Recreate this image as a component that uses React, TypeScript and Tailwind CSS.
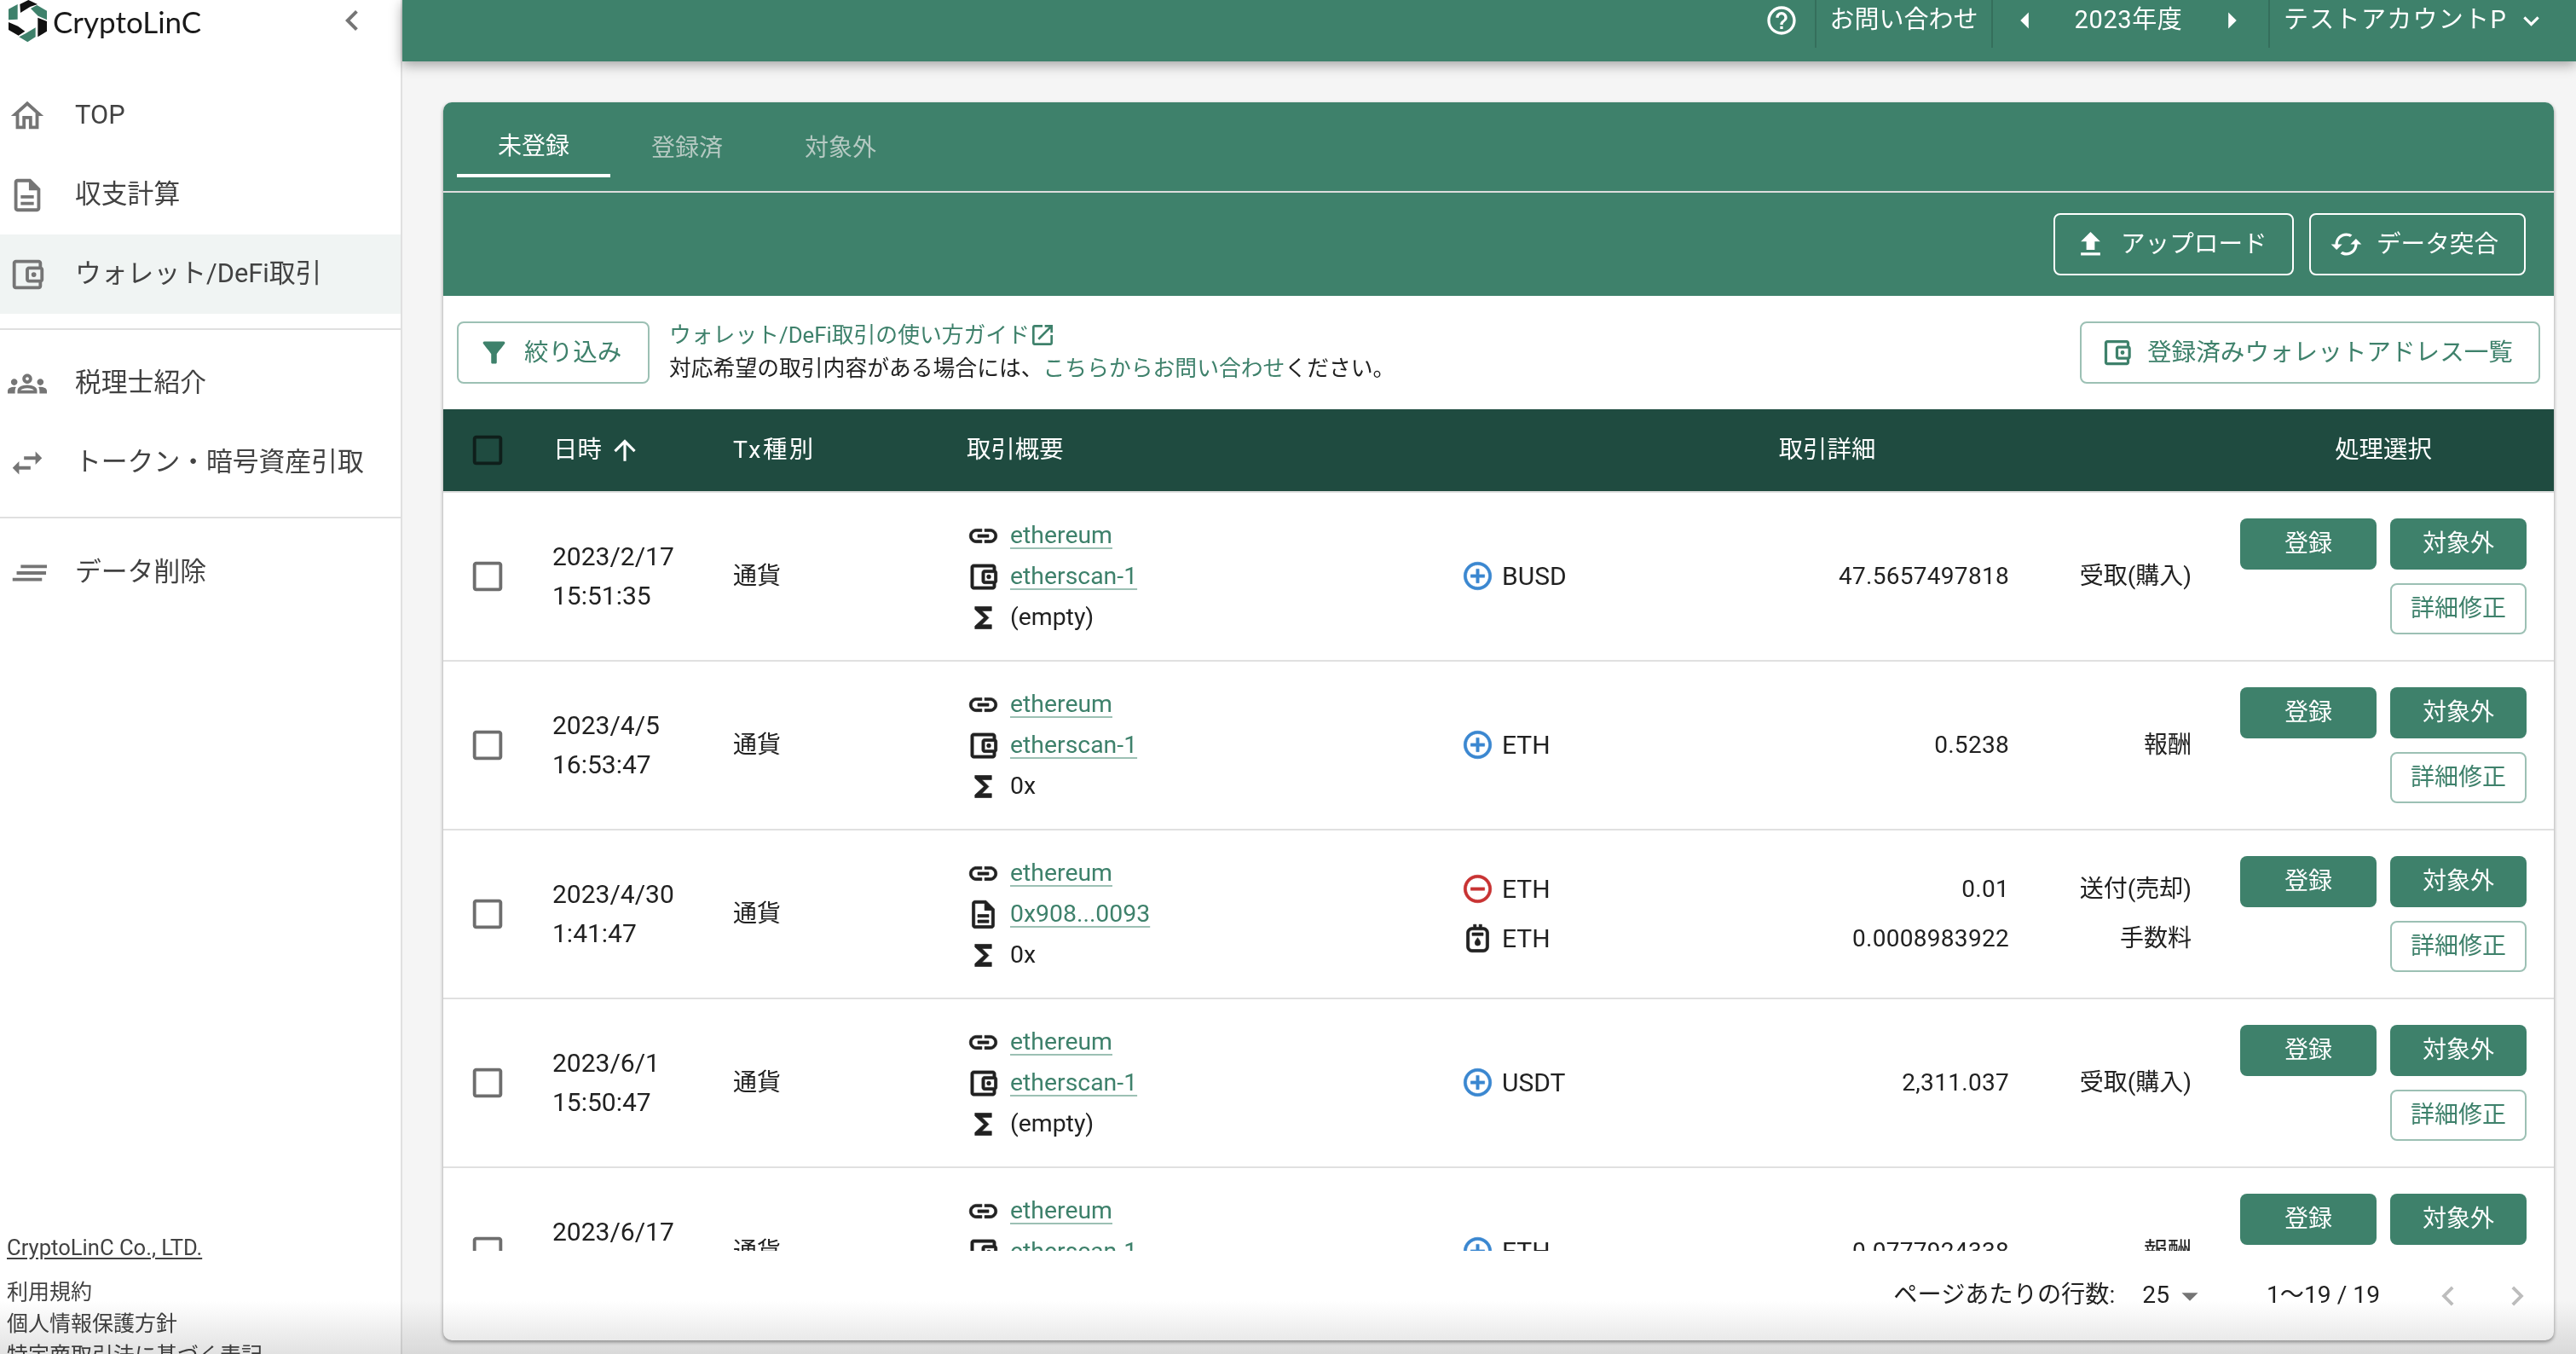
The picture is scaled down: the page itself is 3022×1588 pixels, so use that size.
import type { ReactNode } from "react";

const P = {
  home: "m12 5.69 5 4.5V18h-2v-6H9v6H7v-7.81zM12 3 2 12h3v8h6v-6h2v6h6v-8h3z",
  doc: "M8 16h8v2H8zm0-4h8v2H8zm6-10H6c-1.1 0-2 .9-2 2v16c0 1.1.89 2 1.99 2H18c1.1 0 2-.9 2-2V8zm4 18H6V4h7v5h5z",
  wallet:
    "M21 7.28V5c0-1.1-.9-2-2-2H5c-1.11 0-2 .9-2 2v14c0 1.1.89 2 2 2h14c1.1 0 2-.9 2-2v-2.28c.59-.35 1-.98 1-1.72V9c0-.74-.41-1.38-1-1.72M20 9v6h-7V9zM5 19V5h14v2h-6c-1.1 0-2 .9-2 2v6c0 1.1.9 2 2 2h6v2zM16 10.5a1.5 1.5 0 1 0 0 3 1.5 1.5 0 0 0 0-3",
  groups:
    "M4 13c1.1 0 2-.9 2-2s-.9-2-2-2-2 .9-2 2 .9 2 2 2m1.13 1.1c-.37-.06-.74-.1-1.13-.1-.99 0-1.93.21-2.78.58C.48 14.9 0 15.62 0 16.43V18h4.5v-1.61c0-.83.23-1.61.63-2.29M20 13c1.1 0 2-.9 2-2s-.9-2-2-2-2 .9-2 2 .9 2 2 2m4 3.43c0-.81-.48-1.53-1.22-1.85-.85-.37-1.79-.58-2.78-.58-.39 0-.76.04-1.13.1.4.68.63 1.46.63 2.29V18H24zm-7.76-2.78c-1.17-.52-2.61-.9-4.24-.9s-3.07.39-4.24.9C6.68 14.13 6 15.21 6 16.39V18h12v-1.61c0-1.18-.68-2.26-1.76-2.74M8.07 16c.09-.23.13-.39.91-.69.97-.38 1.99-.56 3.02-.56s2.05.18 3.02.56c.77.3.81.46.91.69zM12 8c.55 0 1 .45 1 1s-.45 1-1 1-1-.45-1-1 .45-1 1-1m0-2c-1.66 0-3 1.34-3 3s1.34 3 3 3 3-1.34 3-3-1.34-3-3-3",
  swap: "M6.99 11 3 15l3.99 4v-3H14v-2H6.99zM21 9l-3.99-4v3H10v2h7.01v3z",
  notes: "M8 7h18v2H8zM5.5 11h18v2H5.500zM3 15h18v2H3z",
  chevL: "M15.41 7.41 14 6l-6 6 6 6 1.41-1.41L10.83 12z",
  chevR: "M10 6 8.59 7.41 13.17 12l-4.58 4.59L10 18l6-6z",
  help: "M11 18h2v-2h-2zm1-16C6.48 2 2 6.48 2 12s4.48 10 10 10 10-4.48 10-10S17.52 2 12 2m0 18c-4.41 0-8-3.59-8-8s3.59-8 8-8 8 3.59 8 8-3.59 8-8 8m0-14c-2.21 0-4 1.79-4 4h2c0-1.1.9-2 2-2s2 .9 2 2c0 2-3 1.75-3 5h2c0-2.25 3-2.5 3-5 0-2.21-1.79-4-4-4",
  arrowL: "M14 7l-5 5 5 5V7z",
  arrowR: "m10 17 5-5-5-5v10z",
  down: "M7.41 8.59 12 13.17l4.59-4.58L18 10l-6 6-6-6z",
  dropdown: "M7 10l5 5 5-5z",
  upload: "M9 16h6v-6h4l-7-7-7 7h4zm-4 2h14v2H5z",
  cached:
    "m19 8-4 4h3c0 3.31-2.69 6-6 6-1.01 0-1.97-.25-2.8-.7l-1.46 1.46C8.97 19.54 10.43 20 12 20c4.42 0 8-3.58 8-8h3zM6 12c0-3.31 2.69-6 6-6 1.01 0 1.97.25 2.8.7l1.46-1.46C15.03 4.46 13.57 4 12 4c-4.42 0-8 3.58-8 8H1l4 4 4-4z",
  filter:
    "M4.25 5.61C6.27 8.2 10 13 10 13v6c0 .55.45 1 1 1h2c.55 0 1-.45 1-1v-6s3.72-4.8 5.74-7.39c.51-.66.04-1.61-.79-1.61H5.04c-.83 0-1.3.95-.79 1.61",
  openNew:
    "M19 19H5V5h7V3H5c-1.11 0-2 .9-2 2v14c0 1.1.89 2 2 2h14c1.1 0 2-.9 2-2v-7h-2zM14 3v2h3.59l-9.83 9.83 1.41 1.41L19 6.41V10h2V3z",
  up: "M4 12l1.41 1.41L11 7.83V20h2V7.83l5.58 5.59L20 12l-8-8-8 8z",
  box: "M19 5v14H5V5h14m0-2H5c-1.1 0-2 .9-2 2v14c0 1.1.9 2 2 2h14c1.1 0 2-.9 2-2V5c0-1.1-.9-2-2-2z",
  link: "M3.9 12c0-1.71 1.39-3.1 3.1-3.1h4V7H7c-2.76 0-5 2.24-5 5s2.24 5 5 5h4v-1.9H7c-1.71 0-3.1-1.39-3.1-3.1zM8 13h8v-2H8v2zm9-6h-4v1.9h4c1.71 0 3.1 1.39 3.1 3.1s-1.39 3.1-3.1 3.1h-4V17h4c2.76 0 5-2.24 5-5s-2.24-5-5-5z",
  sigma: "M18 4H6v2l6.5 6L6 18v2h12v-3h-7l5-5-5-5h7z",
  plus: "M13 7h-2v4H7v2h4v4h2v-4h4v-2h-4V7zm-1-5C6.48 2 2 6.48 2 12s4.48 10 10 10 10-4.48 10-10S17.52 2 12 2zm0 18c-4.41 0-8-3.59-8-8s3.59-8 8-8 8 3.59 8 8-3.59 8-8 8z",
  minus:
    "M7 11v2h10v-2H7zm5-9C6.48 2 2 6.48 2 12s4.48 10 10 10 10-4.48 10-10S17.52 2 12 2zm0 18c-4.41 0-8-3.59-8-8s3.59-8 8-8 8 3.59 8 8-3.59 8-8 8z",
  gas: "M16 4h-1V2h-2v2h-2V2H9v2H8C5.79 4 4 5.79 4 8v10c0 2.21 1.79 4 4 4h8c2.21 0 4-1.79 4-4V8c0-2.21-1.79-4-4-4zm2 14c0 1.1-.9 2-2 2H8c-1.1 0-2-.9-2-2V8c0-1.1.9-2 2-2h8c1.1 0 2 .9 2 2v10zM8 8h8v2H8zM12 11.5c-1 1.4-2 2.500-2 3.800a2 2 0 0 0 4 0c0-1.300-1-2.400-2-3.800z",
};

const Icon = ({ d, className }: { d: string; className: string }) => (
  <svg viewBox="0 0 24 24" fill="currentColor" className={`shrink-0 ${className}`}>
    <path d={d} />
  </svg>
);

const Logo = () => (
  <svg viewBox="0 0 180 150" className="w-[60px] h-[50px] shrink-0">
    <polygon points="70,15 100,0 132,15 106,24 72,45" fill="#111" />
    <polygon points="62,15 62,68 30,70 30,32" fill="#3E816B" />
    <polygon points="108,30 130,18 165,38 165,70 134,56" fill="#3E816B" />
    <polygon points="133,62 165,75 165,110 133,130" fill="#111" />
    <polygon points="125,97 125,130 97,148 67,130 90,118" fill="#3E816B" />
    <polygon points="30,78 63,92 88,110 65,125 30,105" fill="#111" />
  </svg>
);

const NavItem = ({ d, label, active }: { d: string; label: string; active?: boolean }) => (
  <div className={`h-[93px] flex items-center pl-[9px] gap-[33px] text-[30.800px] text-[#424242] ${active ? "bg-[#F0F4F3]" : ""}`}>
    <Icon d={d} className="w-[46px] h-[46px] text-[#757575]" />
    <span>{label}</span>
  </div>
);

const OutlineBtn = ({ d, label, className }: { d: string; label: string; className: string }) => (
  <button className={`h-[73px] flex items-center pl-[22px] gap-[16px] rounded-[8px] border-[2px] text-[28.600px] ${className}`}>
    <Icon d={d} className="w-[39px] h-[39px]" />
    <span>{label}</span>
  </button>
);

type Line = { icon: "plus" | "minus" | "gas"; token: string; amount: string; kind: string };
type Row = { date: string; time: string; hashIcon: string; hash: string; sum: string; lines: Line[] };

const ROWS: Row[] = [
  { date: "2023/2/17", time: "15:51:35", hashIcon: P.wallet, hash: "etherscan-1", sum: "(empty)", lines: [{ icon: "plus", token: "BUSD", amount: "47.5657497818", kind: "受取(購入)" }] },
  { date: "2023/4/5", time: "16:53:47", hashIcon: P.wallet, hash: "etherscan-1", sum: "0x", lines: [{ icon: "plus", token: "ETH", amount: "0.5238", kind: "報酬" }] },
  {
    date: "2023/4/30",
    time: "1:41:47",
    hashIcon: P.doc,
    hash: "0x908...0093",
    sum: "0x",
    lines: [
      { icon: "minus", token: "ETH", amount: "0.01", kind: "送付(売却)" },
      { icon: "gas", token: "ETH", amount: "0.0008983922", kind: "手数料" },
    ],
  },
  { date: "2023/6/1", time: "15:50:47", hashIcon: P.wallet, hash: "etherscan-1", sum: "(empty)", lines: [{ icon: "plus", token: "USDT", amount: "2,311.037", kind: "受取(購入)" }] },
  { date: "2023/6/17", time: "15:50:47", hashIcon: P.wallet, hash: "etherscan-1", sum: "0x", lines: [{ icon: "plus", token: "ETH", amount: "0.0777924338", kind: "報酬" }] },
];

const TxLink = ({ children }: { children: ReactNode }) => (
  <a className="text-[#3E816B] underline decoration-[#9CC0B4] decoration-[2px] underline-offset-[5px]">{children}</a>
);

const SummaryLine = ({ d, children }: { d: string; children: ReactNode }) => (
  <div className="h-[48px] flex items-center gap-[12px] text-[28.400px] text-[#212121]">
    <Icon d={d} className="w-[39px] h-[39px] text-[#212121] stroke-current stroke-[0.4]" />
    {children}
  </div>
);

const TxRow = ({ row }: { row: Row }) => (
  <div className="grid grid-cols-[128px_212px_275px_581px_855px_57px_336px_32px] h-[198px] shrink-0 border-b-[2px] border-[#E0E0E0] items-center text-[#212121]">
    <div className="pl-[29px]">
      <Icon d={P.box} className="w-[46px] h-[46px] text-[#6E6E6E]" />
    </div>
    <div className="text-[30px] leading-[46px]">
      <div>{row.date}</div>
      <div>{row.time}</div>
    </div>
    <div className="text-[28px]">通貨</div>
    <div className="-ml-[1px]">
      <SummaryLine d={P.link}>
        <TxLink>ethereum</TxLink>
      </SummaryLine>
      <SummaryLine d={row.hashIcon}>
        <TxLink>{row.hash}</TxLink>
      </SummaryLine>
      <SummaryLine d={P.sigma}>
        <span>{row.sum}</span>
      </SummaryLine>
    </div>
    <div className="-mt-[1px]">
      {row.lines.map((l) => (
        <div key={l.token + l.amount} className="h-[58px] flex items-center">
          <Icon
            d={P[l.icon]}
            className={`-ml-[2px] w-[39px] h-[39px] stroke-current stroke-[0.4] ${l.icon === "plus" ? "text-[#3A87D0]" : l.icon === "minus" ? "text-[#C83232]" : "text-[#212121]"}`}
          />
          <span className="ml-[9px] text-[30px]">{l.token}</span>
          <span className="ml-auto text-[28px] tracking-[0.3px]">{l.amount}</span>
          <span className="w-[214px] text-right text-[28px]">{l.kind}</span>
        </div>
      ))}
    </div>
    <div />
    <div className="self-start pt-[30px] grid grid-cols-2 gap-x-[16px] gap-y-[16px]">
      <button className="h-[60px] rounded-[8px] bg-[#3E816B] text-white text-[28px]">登録</button>
      <button className="h-[60px] rounded-[8px] bg-[#3E816B] text-white text-[28px]">対象外</button>
      <button className="col-start-2 h-[60px] rounded-[8px] border-[2px] border-[#9CC0B4] text-[#3E816B] text-[28px]">詳細修正</button>
    </div>
    <div />
  </div>
);

export default function App() {
  return (
    <div className="relative flex w-[3022px] h-[1588px] overflow-hidden bg-[#F5F5F5] font-[Roboto,'Noto_Sans_CJK_JP',sans-serif]">
      <aside className="w-[472px] shrink-0 h-full flex flex-col bg-white border-r-[2px] border-[#E0E0E0]">
        <div className="h-[89px] shrink-0 flex items-start relative">
          <Logo />
          <span className="mt-[3px] ml-[2px] text-[35px] leading-[44px] text-[#1a1a1a] font-['Lato',sans-serif]">CryptoLinC</span>
          <Icon d={P.chevL} className="absolute left-[389px] top-0 w-[48px] h-[48px] text-[#757575]" />
        </div>
        <NavItem d={P.home} label="TOP" />
        <NavItem d={P.doc} label="収支計算" />
        <NavItem d={P.wallet} label="ウォレット/DeFi取引" active />
        <div className="mt-[17px] mb-[16px] h-[2px] bg-[#E0E0E0]" />
        <NavItem d={P.groups} label="税理士紹介" />
        <NavItem d={P.swap} label="トークン・暗号資産引取" />
        <div className="mt-[17px] mb-[17px] h-[2px] bg-[#E0E0E0]" />
        <NavItem d={P.notes} label="データ削除" />
        <div className="mt-auto -mb-[20px] pl-[8px] text-[25px] leading-[37px] text-[#424242]">
          <div className="mb-[15px] underline underline-offset-[3px] text-[25.600px]">CryptoLinC Co., LTD.</div>
          <div>利用規約</div>
          <div>個人情報保護方針</div>
          <div>特定商取引法に基づく表記</div>
        </div>
      </aside>

      <main className="flex-1 min-w-0 flex flex-col">
        <header className="h-[72px] shrink-0 bg-[#3E816B] text-white shadow-[0_4px_14px_rgba(0,0,0,0.35)] flex justify-end items-start pr-[34px] text-[29px]">
          <div className="h-[56px] flex items-center pb-[8px] pr-[19px]">
            <Icon d={P.help} className="w-[40px] h-[40px]" />
          </div>
          <div className="h-[56px] w-[207px] flex items-center justify-center pb-[8px] border-l-[2px] border-[#356F5C]">お問い合わせ</div>
          <div className="h-[56px] w-[325px] flex items-center justify-between pl-[15px] pr-[20px] pb-[8px] border-l-[2px] border-[#356F5C]">
            <Icon d={P.arrowL} className="w-[46px] h-[46px]" />
            <span className="tracking-[0.6px]">2023年度</span>
            <Icon d={P.arrowR} className="w-[46px] h-[46px]" />
          </div>
          <div className="h-[56px] flex items-center pl-[16px] pb-[8px] border-l-[2px] border-[#356F5C] tracking-[1.300px]">
            <span>テストアカウントP</span>
            <Icon d={P.down} className="ml-[10px] w-[37px] h-[37px]" />
          </div>
        </header>

        <section className="mt-[48px] ml-[48px] mr-[26px] h-[1452px] flex flex-col rounded-[10px] bg-white overflow-hidden shadow-[0_2px_4px_rgba(0,0,0,0.4)]">
          <div className="h-[106px] shrink-0 pt-[16px] pl-[16px] flex items-start bg-[#3E816B] border-b-[2px] border-[#DDDDDD]">
            <div className="w-[180px] h-[72px] pt-[3px] flex items-center justify-center text-[28px] text-white border-b-[4px] border-white">未登録</div>
            <div className="w-[180px] h-[72px] pt-[3px] flex items-center justify-center text-[28px] text-[#B5C9C2]">登録済</div>
            <div className="w-[180px] h-[72px] pt-[3px] flex items-center justify-center text-[28px] text-[#B5C9C2]">対象外</div>
          </div>

          <div className="h-[121px] shrink-0 pt-[24px] pr-[33px] flex justify-end items-start gap-[18px] bg-[#3E816B] text-white">
            <OutlineBtn d={P.upload} label="アップロード" className="w-[282px] border-white" />
            <OutlineBtn d={P.cached} label="データ突合" className="w-[254px] border-white" />
          </div>

          <div className="h-[133px] shrink-0 flex items-center pl-[16px] pr-[16px] text-[25.800px]">
            <OutlineBtn d={P.filter} label="絞り込み" className="w-[226px] h-[72px] gap-[15px] border-[#9CC0B4] text-[#3E816B]" />
            <div className="ml-[23px] -mt-[2px] leading-[39px]">
              <div className="flex items-center text-[#3E816B]">
                ウォレット/DeFi取引の使い方ガイド
                <Icon d={P.openNew} className="w-[32px] h-[32px] -ml-[1px]" />
              </div>
              <div className="text-[#212121]">
                対応希望の取引内容がある場合には、<span className="text-[#3E816B]">こちらからお問い合わせ</span>ください。
              </div>
            </div>
            <OutlineBtn d={P.wallet} label="登録済みウォレットアドレス一覧" className="ml-auto w-[540px] h-[72px] border-[#9CC0B4] text-[#3E816B]" />
          </div>

          <div className="grid grid-cols-[128px_212px_275px_581px_855px_57px_336px_32px] h-[98px] shrink-0 items-center bg-[#1F4B40] border-b-[2px] border-[#E0E0E0] text-[28.400px] text-white">
            <div className="pl-[29px]">
              <Icon d={P.box} className="w-[46px] h-[46px] text-[#0F1F1B]" />
            </div>
            <div className="flex items-center pl-[1px]">
              日時
              <Icon d={P.up} className="ml-[8px] w-[38px] h-[38px]" />
            </div>
            <div className="tracking-[2.500px]">Tx種別</div>
            <div className="-ml-[1px]">取引概要</div>
            <div className="text-center">取引詳細</div>
            <div />
            <div className="text-center">処理選択</div>
            <div />
          </div>

          <div className="h-[889px] shrink-0 overflow-hidden flex flex-col">
            {ROWS.map((r) => (
              <TxRow key={r.date} row={r} />
            ))}
          </div>

          <div className="flex-1 flex items-center justify-end text-[28.200px] text-[#212121]">
            <span>ページあたりの行数:</span>
            <span className="ml-[32px]">25</span>
            <Icon d={P.dropdown} className="ml-[1px] w-[46px] h-[46px] text-[#757575]" />
            <span className="ml-[67px]">1〜19 / 19</span>
            <Icon d={P.chevL} className="ml-[57px] w-[46px] h-[46px] text-[#BDBDBD]" />
            <Icon d={P.chevR} className="ml-[35px] mr-[20px] w-[46px] h-[46px] text-[#BDBDBD]" />
          </div>
        </section>
      </main>

      <div className="absolute left-0 right-0 bottom-0 h-[62px] pointer-events-none mix-blend-multiply bg-gradient-to-b from-white to-[#E2E2E2]" />
    </div>
  );
}
